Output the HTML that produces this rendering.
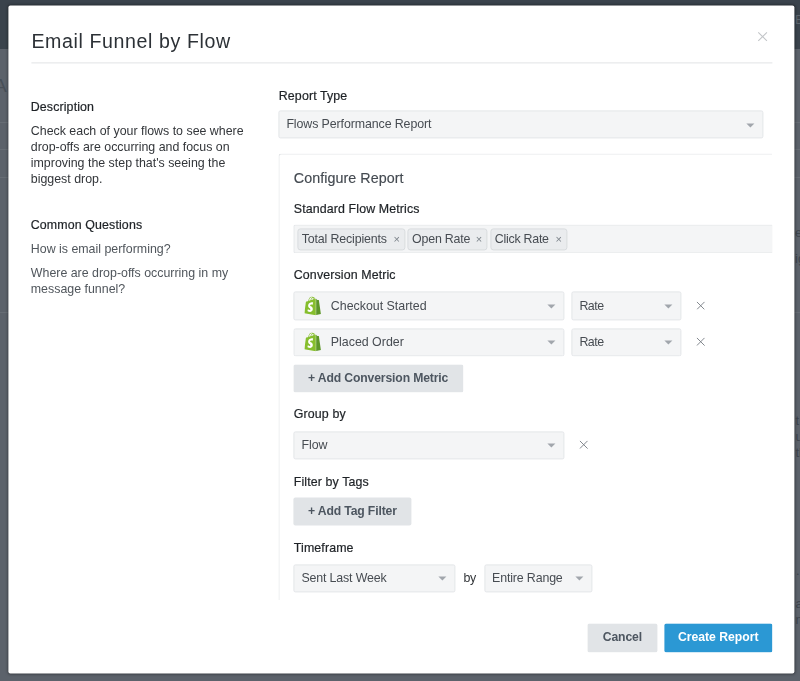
<!DOCTYPE html>
<html lang="en">
<head>
<meta charset="utf-8">
<title>Email Funnel by Flow</title>
<style>
*{box-sizing:border-box;margin:0;padding:0}
html,body{width:800px;height:681px;overflow:hidden}
body{background:#5c626b;font-family:"Liberation Sans",sans-serif;font-size:12.4px;color:#2f3337;position:relative}
.topbar{position:absolute;left:0;top:0;width:800px;height:49px;background:#3a434c}
.bgx{position:absolute;font-size:13px;line-height:16px;color:#3e454d;white-space:nowrap}
.bgl{position:absolute;left:0;width:800px;height:1px;background:rgba(255,255,255,.07)}
.stage{position:absolute;left:0;top:0;width:800px;height:681px;transform:translate(.4px,.4px);will-change:transform}
.modal{position:absolute;left:8px;top:4.5px;width:786px;height:668.9px;background:#fff;border-radius:2px;box-shadow:0 0 3px rgba(0,0,0,.5)}
.abs{position:absolute;white-space:nowrap}
.title{left:31px;top:28px;font-size:19.6px;line-height:26px;color:#2c3136;letter-spacing:.6px}
.close{left:757.4px;top:30.5px;width:10.4px;height:10.4px}
.hr{left:31px;top:62px;width:740.6px;height:1px;background:#e1e3e5}
.lbl{font-size:12.4px;line-height:16px;color:#1e2226;-webkit-text-stroke:.2px #1e2226;letter-spacing:.12px}
.txt{font-size:12.4px;line-height:16px;color:#33363a}
.q{font-size:12.4px;line-height:16px;color:#50565c}
.sel{background:#f4f5f6;border:1px solid #e4e6e9;border-radius:2px;height:28px;font-size:12.4px;line-height:26px;color:#474c52;padding-left:7px}
.sel .arr{position:absolute;right:8px;top:11.5px;width:0;height:0;border-left:4px solid transparent;border-right:4px solid transparent;border-top:4px solid #a1a6ac}
.panel{left:278px;top:153px;width:493.6px;height:447px;border-left:1px solid #e4e6e8;border-top:1px solid #e4e6e8;border-top-left-radius:3px}
.h2{font-size:14.3px;line-height:18px;color:#444a51;letter-spacing:.05px;-webkit-text-stroke:.15px #444a51}
.tag{background:#eaecee;border:1px solid #d9dcdf;border-radius:3px;height:21.5px;line-height:20px;font-size:12.4px;color:#474c52;padding-left:3.4px}
.tag i{font-style:normal;color:#7b8289;font-size:11px;position:absolute;top:0}
.btn{background:#e1e4e7;border-radius:2px;height:28px;line-height:28px;font-weight:700;font-size:12.2px;color:#4d5660;text-align:center}
.btn.blue{background:#2b98d4;color:#fff}
.x{width:8.6px;height:8.6px}
.shop{width:16.5px;height:18.8px}
</style>
</head>
<body>
<div class="topbar"></div>
<div class="bgx" style="left:-6px;top:73px;font-size:19px;line-height:26px;color:#484f58">A</div>
<div class="bgl" style="top:122px"></div><div class="bgl" style="top:149px"></div><div class="bgl" style="top:177px"></div><div class="bgl" style="top:312px"></div>
<div class="bgx" style="left:795px;top:12px;color:#5d666f">E</div>
<div class="bgx" style="left:795px;top:225px">e</div>
<div class="bgx" style="left:795px;top:251px">ig</div>
<div class="bgx" style="left:795.5px;top:413px">t</div>
<div class="bgx" style="left:795.5px;top:429px">u</div>
<div class="bgx" style="left:795.5px;top:445px">th</div>
<div class="bgx" style="left:796px;top:563px">.</div>
<div class="bgx" style="left:795.5px;top:596px">a</div>
<div class="bgx" style="left:795.5px;top:612px">n</div>
<div class="stage">
<div class="modal"></div>

<div class="abs title">Email Funnel by Flow</div>
<svg class="abs close" viewBox="0 0 12 12"><path d="M1 1L11 11M11 1L1 11" stroke="#c2c5c8" stroke-width="1.2" fill="none"/></svg>
<div class="abs hr"></div>

<div class="abs lbl" style="left:30.4px;top:99px">Description</div>
<div class="abs txt" style="left:30.4px;top:123px">Check each of your flows to see where<br>drop-offs are occurring and focus on<br>improving the step that's seeing the<br>biggest drop.</div>
<div class="abs lbl" style="left:30.4px;top:217px">Common Questions</div>
<div class="abs q" style="left:30.4px;top:241px">How is email performing?</div>
<div class="abs q" style="left:30.4px;top:265px">Where are drop-offs occurring in my<br>message funnel?</div>

<div class="abs lbl" style="left:278.4px;top:88px">Report Type</div>
<div class="abs sel" style="left:278px;top:110px;width:485px"><span style="letter-spacing:-.1px">Flows Performance Report</span><span class="arr"></span></div>

<div class="abs panel"></div>
<div class="abs h2" style="left:293.4px;top:169px">Configure Report</div>
<div class="abs lbl" style="left:293.4px;top:201px">Standard Flow Metrics</div>
<div class="abs sel" style="left:293px;top:224px;width:478.6px;height:29px;border-right:0;border-radius:2px 0 0 2px"></div>
<div class="abs tag" style="left:297px;top:228px;width:108px;letter-spacing:-.15px">Total Recipients<i style="left:95px">×</i></div>
<div class="abs tag" style="left:407.3px;top:228px;width:80px;letter-spacing:-.2px">Open Rate<i style="left:67px">×</i></div>
<div class="abs tag" style="left:490px;top:228px;width:76.5px;letter-spacing:-.25px">Click Rate<i style="left:64px">×</i></div>

<div class="abs lbl" style="left:293.4px;top:267px">Conversion Metric</div>
<div class="abs sel" style="left:293px;top:291.3px;width:270.6px;height:28.7px;line-height:28.4px;padding-left:36.4px">Checkout Started<span class="arr"></span></div>
<div class="abs sel" style="left:571px;top:291.3px;width:109.6px;height:28.7px;line-height:28.4px"><span style="letter-spacing:-.5px">Rate</span><span class="arr"></span></div>
<svg class="abs shop" style="left:304.1px;top:295.9px" viewBox="0 0 109.5 124.5"><path fill="#fff" d="M15 45L60 35L62 108L12 100z"/><path fill="#86be2d" d="M74.7,14.8c0,0-1.4,0.4-3.7,1.1c-0.4-1.3-1-2.8-1.8-4.4c-2.6-5-6.5-7.7-11.1-7.7c0,0,0,0,0,0 c-0.3,0-0.6,0-1,0.1c-0.1-0.2-0.3-0.3-0.4-0.5c-2-2.2-4.6-3.2-7.7-3.1c-6,0.2-12,4.5-16.8,12.2c-3.4,5.4-6,12.2-6.7,17.5 c-6.9,2.1-11.7,3.6-11.8,3.7c-3.5,1.1-3.6,1.2-4,4.5C9.1,40.7,0,111.2,0,111.2l75.6,13.1V14.6C75.2,14.7,74.9,14.7,74.7,14.8z M57.2,20.2c-4,1.2-8.4,2.6-12.7,3.9c1.2-4.7,3.6-9.4,6.4-12.5c1.1-1.1,2.6-2.4,4.3-3.2C56.9,12,57.3,16.9,57.2,20.2z M49.1,4.3 c1.4,0,2.6,0.3,3.6,0.9c-1.6,0.8-3.2,2.1-4.7,3.6c-3.8,4.1-6.7,10.5-7.9,16.6c-3.6,1.1-7.2,2.2-10.5,3.2 C31.7,19.1,39.8,4.6,49.1,4.3z M37.4,59.3c0.4,6.4,17.3,7.8,18.3,22.9c0.7,11.9-6.3,20-16.4,20.6c-12.2,0.8-18.9-6.4-18.9-6.4 l2.6-11c0,0,6.7,5.1,12.1,4.7c3.5-0.2,4.8-3.1,4.7-5.1c-0.5-8.4-14.3-7.9-15.2-21.7C23.8,51.8,31.4,40.1,48.2,39 c6.5-0.4,9.8,1.2,9.8,1.2l-3.8,14.4c0,0-4.3-2-9.4-1.6C37.4,53.5,37.3,58.2,37.4,59.3z M61.2,19c0-3-0.4-7.3-1.8-10.9 c4.6,0.9,6.8,6,7.8,9.1C65.4,17.7,63.4,18.3,61.2,19z"/><path fill="#5d9628" d="M78.1,123.9l31.4-7.8c0,0-13.5-91.3-13.6-91.9c-0.1-0.6-0.6-1-1.1-1c-0.5,0-9.3-0.2-9.3-0.2s-5.4-5.2-7.4-7.2 V123.9z"/></svg>
<svg class="abs x" style="left:696.4px;top:300.8px" viewBox="0 0 9 9"><path d="M.4 .4L8.6 8.6M8.6 .4L.4 8.6" stroke="#7d8288" stroke-width="1" fill="none"/></svg>
<div class="abs sel" style="left:293px;top:327.6px;width:270.6px;height:28.4px;padding-left:36.4px">Placed Order<span class="arr"></span></div>
<div class="abs sel" style="left:571px;top:327.6px;width:109.6px;height:28.4px"><span style="letter-spacing:-.5px">Rate</span><span class="arr"></span></div>

<svg class="abs shop" style="left:304.1px;top:332.2px" viewBox="0 0 109.5 124.5"><path fill="#fff" d="M15 45L60 35L62 108L12 100z"/><path fill="#86be2d" d="M74.7,14.8c0,0-1.4,0.4-3.7,1.1c-0.4-1.3-1-2.8-1.8-4.4c-2.6-5-6.5-7.7-11.1-7.7c0,0,0,0,0,0 c-0.3,0-0.6,0-1,0.1c-0.1-0.2-0.3-0.3-0.4-0.5c-2-2.2-4.6-3.2-7.7-3.1c-6,0.2-12,4.5-16.8,12.2c-3.4,5.4-6,12.2-6.7,17.5 c-6.9,2.1-11.7,3.6-11.8,3.7c-3.5,1.1-3.6,1.2-4,4.5C9.1,40.7,0,111.2,0,111.2l75.6,13.1V14.6C75.2,14.7,74.9,14.7,74.7,14.8z M57.2,20.2c-4,1.2-8.4,2.6-12.7,3.9c1.2-4.7,3.6-9.4,6.4-12.5c1.1-1.1,2.6-2.4,4.3-3.2C56.9,12,57.3,16.9,57.2,20.2z M49.1,4.3 c1.4,0,2.6,0.3,3.6,0.9c-1.6,0.8-3.2,2.1-4.7,3.6c-3.8,4.1-6.7,10.5-7.9,16.6c-3.6,1.1-7.2,2.2-10.5,3.2 C31.7,19.1,39.8,4.6,49.1,4.3z M37.4,59.3c0.4,6.4,17.3,7.8,18.3,22.9c0.7,11.9-6.3,20-16.4,20.6c-12.2,0.8-18.9-6.4-18.9-6.4 l2.6-11c0,0,6.7,5.1,12.1,4.7c3.5-0.2,4.8-3.1,4.7-5.1c-0.5-8.4-14.3-7.9-15.2-21.7C23.8,51.8,31.4,40.1,48.2,39 c6.5-0.4,9.8,1.2,9.8,1.2l-3.8,14.4c0,0-4.3-2-9.4-1.6C37.4,53.5,37.3,58.2,37.4,59.3z M61.2,19c0-3-0.4-7.3-1.8-10.9 c4.6,0.9,6.8,6,7.8,9.1C65.4,17.7,63.4,18.3,61.2,19z"/><path fill="#5d9628" d="M78.1,123.9l31.4-7.8c0,0-13.5-91.3-13.6-91.9c-0.1-0.6-0.6-1-1.1-1c-0.5,0-9.3-0.2-9.3-0.2s-5.4-5.2-7.4-7.2 V123.9z"/></svg>
<svg class="abs x" style="left:696.4px;top:337px" viewBox="0 0 9 9"><path d="M.4 .4L8.6 8.6M8.6 .4L.4 8.6" stroke="#7d8288" stroke-width="1" fill="none"/></svg>
<div class="abs btn" style="left:293px;top:363.5px;width:169.5px"><span style="letter-spacing:-.14px">+ Add Conversion Metric</span></div>

<div class="abs lbl" style="left:293.4px;top:406px">Group by</div>
<div class="abs sel" style="left:293px;top:430.5px;width:270.6px;height:28.4px">Flow<span class="arr"></span></div>

<svg class="abs x" style="left:579.4px;top:440.0px" viewBox="0 0 9 9"><path d="M.4 .4L8.6 8.6M8.6 .4L.4 8.6" stroke="#7d8288" stroke-width="1" fill="none"/></svg>
<div class="abs lbl" style="left:293.4px;top:474px">Filter by Tags</div>
<div class="abs btn" style="left:293px;top:497.2px;width:118px"><span style="letter-spacing:-.14px">+ Add Tag Filter</span></div>

<div class="abs lbl" style="left:293.4px;top:540px">Timeframe</div>
<div class="abs sel" style="left:293px;top:563.5px;width:162px;height:28.4px"><span style="letter-spacing:-.15px">Sent Last Week</span><span class="arr"></span></div>
<div class="abs txt" style="left:463px;top:569.6px;letter-spacing:-.3px">by</div>
<div class="abs sel" style="left:483.7px;top:563.5px;width:108px;height:28.4px"><span style="letter-spacing:-.15px">Entire Range</span><span class="arr"></span></div>

<div class="abs btn" style="left:587.4px;top:622.8px;width:69.2px;height:28.9px;line-height:29.4px"><span style="letter-spacing:-.15px">Cancel</span></div>
<div class="abs btn blue" style="left:663.6px;top:622.8px;width:108.4px;height:28.9px;line-height:29.4px">Create Report</div>
</div>
</body>
</html>
